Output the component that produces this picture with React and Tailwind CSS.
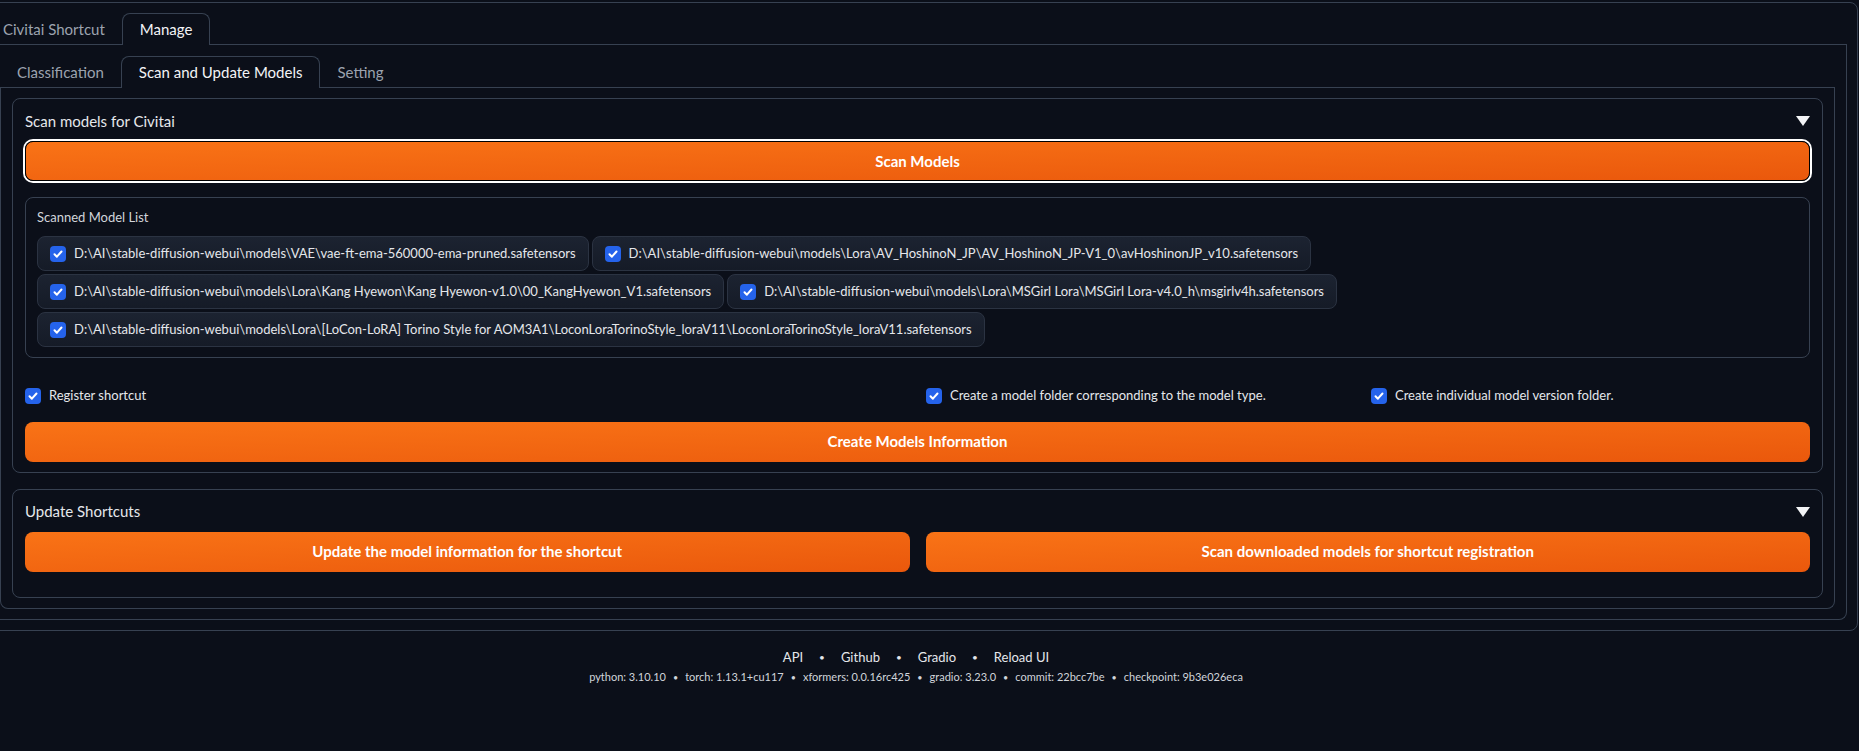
const models = [
  "D:\\AI\\stable-diffusion-webui\\models\\VAE\\vae-ft-ema-560000-ema-pruned.safetensors",
  "D:\\AI\\stable-diffusion-webui\\models\\Lora\\AV_HoshinoN_JP\\AV_HoshinoN_JP-V1_0\\avHoshinonJP_v10.safetensors",
  "D:\\AI\\stable-diffusion-webui\\models\\Lora\\Kang Hyewon\\Kang Hyewon-v1.0\\00_KangHyewon_V1.safetensors",
  "D:\\AI\\stable-diffusion-webui\\models\\Lora\\MSGirl Lora\\MSGirl Lora-v4.0_h\\msgirlv4h.safetensors",
  "D:\\AI\\stable-diffusion-webui\\models\\Lora\\[LoCon-LoRA] Torino Style for AOM3A1\\LoconLoraTorinoStyle_loraV11\\LoconLoraTorinoStyle_loraV11.safetensors",
];

const versions = [
  "python: 3.10.10",
  "torch: 1.13.1+cu117",
  "xformers: 0.0.16rc425",
  "gradio: 3.23.0",
  "commit: 22bcc7be",
  "checkpoint: 9b3e026eca",
];

function Check() {
  return (
    <span className="w-4 h-4 shrink-0 rounded-[4px] bg-[#2563eb] flex items-center justify-center">
      <svg viewBox="0 0 16 16" className="w-4 h-4" fill="none" stroke="white" strokeWidth={2} strokeLinecap="round" strokeLinejoin="round">
        <path d="M4.5 8.3l2.4 2.4 4.6-5.2" />
      </svg>
    </span>
  );
}

function Caret() {
  return (
    <svg viewBox="0 0 14 10" className="w-[14px] h-[10px]">
      <polygon points="0,0 14,0 7,10" fill="#f3f4f6" />
    </svg>
  );
}

function OrangeButton({ children, focused }) {
  return (
    <button
      className={`h-[40px] w-full rounded-lg bg-gradient-to-br from-[#f97316] to-[#ea580c] text-white font-bold text-[15px] ${focused ? 'border border-black ring-2 ring-white' : ''}`}
    >
      {children}
    </button>
  );
}

function Tab({ label, active }) {
  return active ? (
    <div className="h-[32px] px-[17px] flex items-center border border-b-0 border-[#374151] rounded-t-lg bg-[#0b0f19] mb-[-1px] text-[#f3f4f6]">
      {label}
    </div>
  ) : (
    <div className="h-[32px] px-[17px] flex items-center text-[#9ca3af]">{label}</div>
  );
}

export default function App() {
  return (
    <div className="min-h-[751px] bg-[#0b0f19] overflow-hidden text-[#e5e7eb] font-['Lato',sans-serif]">
      <div className="ml-[-23px] mt-[2px] w-[1881px] border border-[#374151] rounded-lg p-[10px]">
        <div className="flex border-b border-[#374151] text-[15px] h-[32px] ml-[-2px]">
          <Tab label="Civitai Shortcut" />
          <Tab label="Manage" active />
        </div>

        <div className="border border-t-0 border-[#374151] rounded-b-lg px-[11px] pt-[11px] pb-[10px]">
          <div className="flex border-b border-[#374151] text-[15px] h-[32px]">
            <Tab label="Classification" />
            <Tab label="Scan and Update Models" active />
            <Tab label="Setting" />
          </div>

          <div className="border border-t-0 border-[#374151] rounded-b-lg px-[11px] pt-[10px] pb-[10px] flex flex-col gap-[16px]">
            <div className="border border-[#374151] rounded-lg px-3 pt-[12px] pb-[10px]">
              <div className="flex items-center justify-between h-[20px]">
                <span className="text-[15px]">Scan models for Civitai</span>
                <Caret />
              </div>
              <div className="mt-[10px]">
                <OrangeButton focused>Scan Models</OrangeButton>
              </div>

              <div className="mt-[16px] border border-[#374151] rounded-lg px-[11px] pt-[10px] pb-[10px]">
                <div className="text-[13px] text-[#d1d5db] h-[18px] leading-[18px]">Scanned Model List</div>
                <div className="mt-[10px] flex flex-wrap gap-[3px]">
                  {models.map((m) => (
                    <label
                      key={m}
                      className="h-[35px] flex items-center gap-2 px-3 rounded-lg border border-[#2b3342] bg-gradient-to-b from-[#1c2331] to-[#151b27] text-[13px] text-[#e5e7eb]"
                    >
                      <Check />
                      <span className="whitespace-nowrap">{m}</span>
                    </label>
                  ))}
                </div>
              </div>

              <div className="mt-[28px] grid grid-cols-[885px_429px_1fr] gap-4 text-[13px]">
                <label className="flex items-center gap-2">
                  <Check />
                  <span>Register shortcut</span>
                </label>
                <label className="flex items-center gap-2">
                  <Check />
                  <span>Create a model folder corresponding to the model type.</span>
                </label>
                <label className="flex items-center gap-2">
                  <Check />
                  <span>Create individual model version folder.</span>
                </label>
              </div>

              <div className="mt-[16px]">
                <OrangeButton>Create Models Information</OrangeButton>
              </div>
            </div>

            <div className="border border-[#374151] rounded-lg px-3 pt-[12px] pb-[25px]">
              <div className="flex items-center justify-between h-[20px]">
                <span className="text-[15px]">Update Shortcuts</span>
                <Caret />
              </div>
              <div className="mt-[10px] grid grid-cols-2 gap-4">
                <OrangeButton>Update the model information for the shortcut</OrangeButton>
                <OrangeButton>Scan downloaded models for shortcut registration</OrangeButton>
              </div>
            </div>
          </div>
        </div>
      </div>

      <div className="mt-[17px] pr-[27px] flex flex-col items-center gap-[2px]">
        <div className="flex items-center text-[13px] text-[#e5e7eb]">
          {["API", "Github", "Gradio", "Reload UI"].map((l, i) => (
            <span key={l} className="flex items-center">
              {i > 0 && <span className="mx-[16px] text-[10px]">•</span>}
              <span>{l}</span>
            </span>
          ))}
        </div>
        <div className="flex items-center text-[11px] text-[#d1d5db]">
          {versions.map((v, i) => (
            <span key={v} className="flex items-center">
              {i > 0 && <span className="mx-[7px] text-[9px]">•</span>}
              <span>{v}</span>
            </span>
          ))}
        </div>
      </div>
    </div>
  );
}
